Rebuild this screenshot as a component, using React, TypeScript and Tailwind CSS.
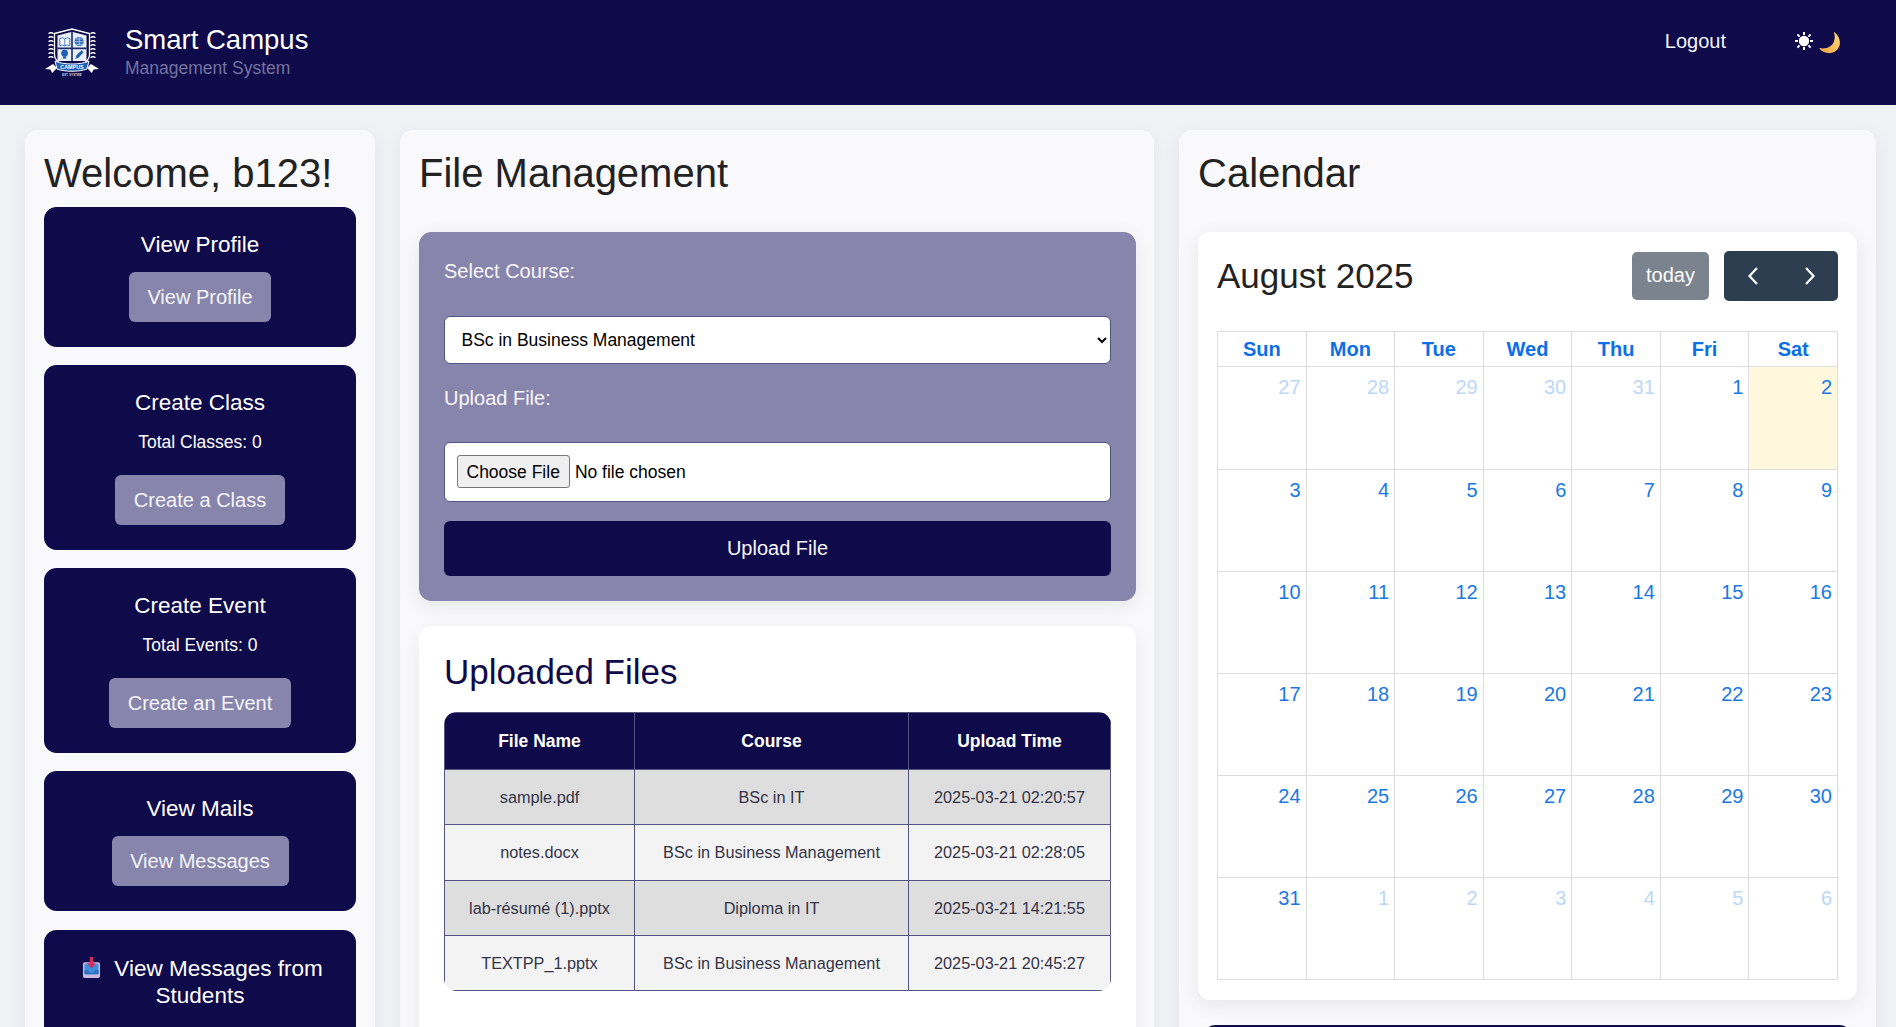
import React from "react";

const FF = { fontFamily: '"Liberation Sans", Arial, sans-serif' };

function Logo() {
  return (
    <svg width="54" height="50" viewBox="0 0 54 50" className="shrink-0">
      <path d="M9.5 5.5 L27 1 L44.5 5.5 L44.5 27 C44.5 33 36 38 27 42 C18 38 9.5 33 9.5 27 Z" fill="#0f0a4a" stroke="#fff" strokeWidth="1.3" />
      <path d="M12.5 7.5 L27 3.8 L41.5 7.5 L41.5 33 L12.5 33 Z" fill="#e9eff9" />
      <path d="M26.2 3.8 H27.8 V33 H26.2 Z M12.5 19.6 H41.5 V21.2 H12.5 Z" fill="#1a2a6a" />
      <path d="M14.8 10.5 C17 9.6 18.8 9.9 19.8 11 C20.8 9.9 22.6 9.6 24.8 10.5 L24.8 17.6 C22.6 16.8 20.8 17 19.8 18 C18.8 17 17 16.8 14.8 17.6 Z" fill="#fff" stroke="#2a66b8" strokeWidth="0.9" />
      <path d="M19.8 11 V18" stroke="#2a66b8" strokeWidth="0.8" />
      <circle cx="34.2" cy="13.6" r="4.6" fill="#2a66b8" />
      <path d="M29.6 13.6 H38.8 M34.2 9 V18.2 M30.6 11 H37.8 M30.6 16.2 H37.8" stroke="#e9eff9" strokeWidth="0.6" />
      <circle cx="19.6" cy="25.2" r="3.4" fill="#1f5fb5" />
      <rect x="18" y="28.2" width="3.2" height="2.4" fill="#1f5fb5" />
      <path d="M30.2 31 L31.6 27 L36.6 22.2 L38.6 24.2 L33.7 29.4 Z" fill="#1f5fb5" />
      <g fill="#fff">
        {[5, 9, 13, 17, 21, 25, 29].map((y) => (
          <g key={y}>
            <ellipse cx="4.8" cy={y} rx="1.6" ry="0.8" transform={`rotate(-30 4.8 ${y})`} />
            <ellipse cx="7.2" cy={y} rx="1.6" ry="0.8" transform={`rotate(30 7.2 ${y})`} />
            <ellipse cx="46.8" cy={y} rx="1.6" ry="0.8" transform={`rotate(-30 46.8 ${y})`} />
            <ellipse cx="49.2" cy={y} rx="1.6" ry="0.8" transform={`rotate(30 49.2 ${y})`} />
          </g>
        ))}
        <path d="M0 41 L8 36 L12 40 L7 45 L5.5 41.5 Z" />
        <path d="M54 41 L46 36 L42 40 L47 45 L48.5 41.5 Z" />
      </g>
      <path d="M10 33 C18 37 36 37 44 33 L42 41 C34 44 20 44 12 41 Z" fill="#1f5fb5" stroke="#fff" strokeWidth="1" />
      <text x="27" y="40.6" textAnchor="middle" fontSize="5.4" fontWeight="700" fill="#fff" style={FF}>CAMPUS</text>
      <text x="27" y="47.6" textAnchor="middle" fontSize="2.6" fontWeight="700" fill="#dfe3f5" letterSpacing="0.3" style={FF}>EST SYSTEM</text>
    </svg>
  );
}

function Sun() {
  return (
    <svg width="18" height="18" viewBox="0 0 18 18" className="shrink-0">
      <circle cx="9" cy="9" r="5.2" fill="#fff" />
      <g stroke="#fff" strokeWidth="2">
        <path d="M9 0 V3 M9 15 V18 M0 9 H3 M15 9 H18 M2.4 2.4 L4.6 4.6 M13.4 13.4 L15.6 15.6 M2.4 15.6 L4.6 13.4 M13.4 4.6 L15.6 2.4" />
      </g>
    </svg>
  );
}

function Moon() {
  return (
    <svg width="22" height="22" viewBox="0 0 22 22" className="shrink-0 mt-[4px]">
      <defs>
        <linearGradient id="moonGrad" x1="1" y1="0" x2="0" y2="1">
          <stop offset="0" stopColor="#ffd878" />
          <stop offset="1" stopColor="#f2a444" />
        </linearGradient>
      </defs>
      <path d="M15.5 0.3 C20 3.5 23 11 19.2 16.6 C15 22.6 5.5 22.6 0.6 16.8 C0.3 16.4 0.6 16 1.1 16.1 C7 17.2 12.6 15 14.8 10 C16 7 16 3.5 15 0.8 C14.9 0.3 15.2 0.1 15.5 0.3 Z" fill="url(#moonGrad)" />
    </svg>
  );
}

function Inbox() {
  return (
    <svg width="19" height="23" viewBox="0 0 20 23" className="ml-[5px] mr-[13px] inline-block align-[-3px]">
      <rect x="1" y="6" width="18" height="16.5" rx="2" fill="#c9bce0" />
      <rect x="2.6" y="7.5" width="14.8" height="11" rx="1" fill="#3f8fdc" />
      <path d="M2.6 14.5 H6.5 C7 16.5 8.5 17 10 17 C11.5 17 13 16.5 13.5 14.5 H17.4 V18.5 H2.6 Z" fill="#2f6fc0" />
      <path d="M8.2 0.5 H11.8 V7 H14.6 L10 12.5 L5.4 7 H8.2 Z" fill="#cf2e5e" />
    </svg>
  );
}

function ActionCard({ title, sub, button, btnW, icon }: { title: string; sub?: string; button?: string; btnW?: string; icon?: boolean }) {
  return (
    <div className={`${icon ? "mt-[19px]" : "mt-[18px] first-of-type:mt-0"} rounded-[12.5px] bg-[#0f0a4a] px-[25px] pt-[25px] pb-[25px] text-center text-white`}>
      <h3 className={`text-[22.5px] font-normal ${icon ? "leading-[27px] pb-[70px]" : "leading-[25px]"}`}>
        {icon && <Inbox />}
        {title}
      </h3>
      {sub && <p className="mt-[17px] mb-[23px] text-[17.5px] leading-[20px]">{sub}</p>}
      {button && (
        <button className={`${sub ? "" : "mt-[15px]"} ${btnW} h-[50px] rounded-[6px] bg-[#8785ab] text-[20px] text-[#f5f5fa]`}>{button}</button>
      )}
    </div>
  );
}

const weeks = [
  [27, 28, 29, 30, 31, 1, 2],
  [3, 4, 5, 6, 7, 8, 9],
  [10, 11, 12, 13, 14, 15, 16],
  [17, 18, 19, 20, 21, 22, 23],
  [24, 25, 26, 27, 28, 29, 30],
  [31, 1, 2, 3, 4, 5, 6],
];
const days = ["Sun", "Mon", "Tue", "Wed", "Thu", "Fri", "Sat"];
const files = [
  ["sample.pdf", "BSc in IT", "2025-03-21 02:20:57", 55],
  ["notes.docx", "BSc in Business Management", "2025-03-21 02:28:05", 56],
  ["lab-résumé (1).pptx", "Diploma in IT", "2025-03-21 14:21:55", 55],
  ["TEXTPP_1.pptx", "BSc in Business Management", "2025-03-21 20:45:27", 55],
];

export default function App() {
  return (
    <div className="h-screen overflow-hidden bg-[#f0f2f5]" style={FF}>
      <header className="flex h-[105px] items-center bg-[#0f0a4a] pl-[45px] text-white">
        <Logo />
        <div className="ml-[26px] -mt-[3px]">
          <div className="text-[27.5px] leading-[32px]">Smart Campus</div>
          <div className="mt-[2px] text-[17.5px] leading-[20px] text-[#74729f]">Management System</div>
        </div>
        <div className="ml-auto mr-[55px] flex items-center -mt-[23px]">
          <span className="mr-[69px] text-[20px] leading-[23px] text-[#f4f4fa]">Logout</span>
          <Sun />
          <span className="ml-[6px]"><Moon /></span>
        </div>
      </header>

      <main className="flex items-start gap-[25px] pl-[25px] pr-[20px] pt-[25px]">
        <aside className="w-[350px] shrink-0 rounded-[12.5px] bg-[#f9f9fb] px-[19px] pt-[20px] pb-[20px] shadow-[0_5px_19px_rgba(0,0,0,0.06)]">
          <h2 className="mb-[11px] text-[40px] leading-[46px] font-normal text-[#222222]">Welcome, b123!</h2>
          <ActionCard title="View Profile" button="View Profile" btnW="w-[142px]" />
          <ActionCard title="Create Class" sub="Total Classes: 0" button="Create a Class" btnW="w-[170px]" />
          <ActionCard title="Create Event" sub="Total Events: 0" button="Create an Event" btnW="w-[182px]" />
          <ActionCard title="View Mails" button="View Messages" btnW="w-[177px]" />
          <ActionCard title="View Messages from Students" icon />
        </aside>

        <section className="w-[754px] shrink-0 rounded-[12.5px] bg-[#f9f9fb] pl-[19px] pr-[18px] pt-[20px] pb-[20px] shadow-[0_5px_19px_rgba(0,0,0,0.06)]">
          <h2 className="mb-[36px] text-[40px] leading-[46px] font-normal text-[#222222]">File Management</h2>
          <form className="mb-[25px] h-[369px] rounded-[12.5px] bg-[#8785ab] px-[25px] pt-[28px] shadow-[0_5px_19px_rgba(0,0,0,0.08)]">
            <label className="block text-[20px] leading-[23px] text-[#f7f7fb]">Select Course:</label>
            <select className="mt-[33px] block h-[48px] w-full rounded-[6px] border border-[#55537f] bg-white px-[12.5px] text-[17.5px] text-black">
              <option>BSc in Business Management</option>
            </select>
            <label className="mt-[23px] block text-[20px] leading-[23px] text-[#f7f7fb]">Upload File:</label>
            <input
              type="file"
              className="mt-[32px] block h-[60px] w-full rounded-[6px] border border-[#55537f] bg-white p-[11.5px] text-[17.5px] leading-[33px] text-black file:mr-[5px] file:h-[33px] file:rounded-[3px] file:border file:border-solid file:border-[#767676] file:bg-[#efefef] file:px-[9px] file:text-[17.5px] file:text-black"
            />
            <button type="button" className="mt-[19px] block h-[55px] w-full rounded-[6px] bg-[#0f0a4a] pb-[2px] text-[20px] text-[#f7f7fb]">Upload File</button>
          </form>
          <div className="rounded-[12.5px] bg-white px-[25px] pt-[25px] pb-[60px] shadow-[0_5px_19px_rgba(0,0,0,0.06)]">
            <h2 className="mb-[20px] text-[35px] leading-[41px] font-normal text-[#0f0a4a]">Uploaded Files</h2>
            <div className="overflow-hidden rounded-[12.5px]">
              <table className="w-full table-fixed border-collapse text-center text-[16.25px]">
                <thead>
                  <tr className="h-[57px] bg-[#0f0a4a] text-[17.5px] text-white">
                    <th className="w-[190px] border border-[#55537f] font-bold">File Name</th>
                    <th className="w-[274px] border border-[#55537f] font-bold">Course</th>
                    <th className="border border-[#55537f] font-bold">Upload Time</th>
                  </tr>
                </thead>
                <tbody>
                  {files.map((f, i) => (
                    <tr key={i} className={`${f[3] === 56 ? "h-[56px]" : "h-[55px]"} ${i % 2 === 0 ? "bg-[#dedede]" : "bg-[#f3f3f3]"} text-[#333348]`}>
                      <td className="border border-[#55537f]">{f[0]}</td>
                      <td className="border border-[#55537f]">{f[1]}</td>
                      <td className="border border-[#55537f]">{f[2]}</td>
                    </tr>
                  ))}
                </tbody>
              </table>
            </div>
          </div>
        </section>

        <section className="min-w-0 flex-1 rounded-[12.5px] bg-[#f9f9fb] px-[19px] pt-[20px] pb-[20px] shadow-[0_5px_19px_rgba(0,0,0,0.06)]">
          <h2 className="mb-[36px] text-[40px] leading-[46px] font-normal text-[#222222]">Calendar</h2>
          <div className="mb-[25px] h-[768px] rounded-[12.5px] bg-white px-[19px] pt-[19px] shadow-[0_5px_19px_rgba(0,0,0,0.08)]">
            <div className="mb-[30px] flex h-[50px] items-center justify-between">
              <h2 className="pb-[2px] text-[35px] leading-[41px] font-normal text-[#222222]">August 2025</h2>
              <div className="flex items-center">
                <button className="mr-[15px] h-[48px] w-[77px] rounded-[5px] bg-[#7b838e] pb-[2px] text-[20px] text-white">today</button>
                <div className="flex h-[50px] w-[114px] items-center justify-around rounded-[5px] bg-[#2c3e50] text-white">
                  <svg width="14" height="22" viewBox="0 0 14 22" fill="none" stroke="#fff" strokeWidth="2.2"><path d="M11 3 L3.5 11 L11 19" /></svg>
                  <svg width="14" height="22" viewBox="0 0 14 22" fill="none" stroke="#fff" strokeWidth="2.2"><path d="M3 3 L10.5 11 L3 19" /></svg>
                </div>
              </div>
            </div>
            <table className="w-full table-fixed border-collapse text-[20px]">
              <thead>
                <tr className="h-[35px]">
                  {days.map((d) => (
                    <th key={d} className="border border-[#dddddd] font-bold text-[#0b6fe8]">{d}</th>
                  ))}
                </tr>
              </thead>
              <tbody>
                {weeks.map((w, wi) => (
                  <tr key={wi} className={wi === 0 ? "h-[103px]" : "h-[102px]"}>
                    {w.map((d, di) => {
                      const other = (wi === 0 && d > 20) || (wi === 5 && d < 20);
                      const today = wi === 0 && d === 2;
                      return (
                        <td key={di} className={`border border-[#dddddd] px-[5px] pt-[9px] pb-[5px] text-right align-top leading-[23px] ${today ? "bg-[#fff8dd]" : ""} ${other ? "text-[#bcd7f8]" : "text-[#1a78e4]"}`}>
                          {d}
                        </td>
                      );
                    })}
                  </tr>
                ))}
              </tbody>
            </table>
          </div>
          <div className="mx-[5px] h-[200px] rounded-t-[12.5px] bg-[#0f0a4a]" />
        </section>
      </main>
    </div>
  );
}
